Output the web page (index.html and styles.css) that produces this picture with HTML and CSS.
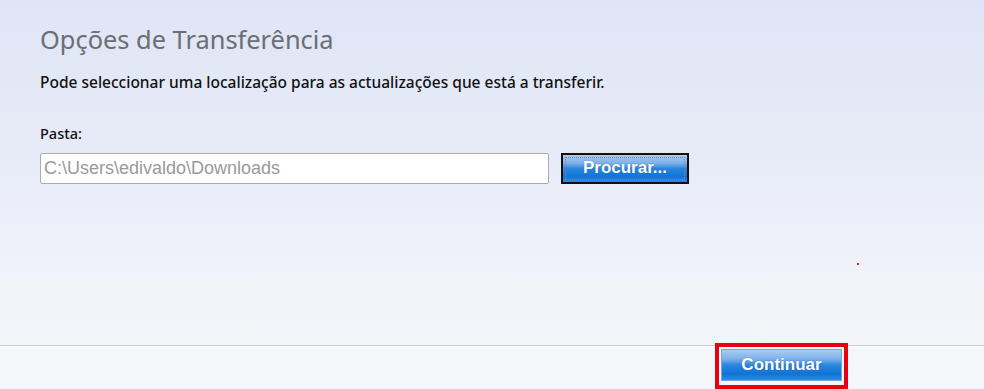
FILE: index.html
```html
<!DOCTYPE html>
<html lang="pt">
<head>
<meta charset="utf-8">
<link rel="stylesheet" href="styles.css">
</head>
<body>
<div class="page">
  <main class="content">
    <h1 class="title">Opções de Transferência</h1>
    <p class="intro">Pode seleccionar uma localização para as actualizações que está a transferir.</p>
    <label class="label">Pasta:</label>
    <div class="row">
      <div class="input">C:\Users\edivaldo\Downloads</div>
      <div class="btn btn-focus"><span class="focus">Procurar...</span></div>
    </div>
    <span class="dot"></span>
  </main>
  <footer class="footer">
    <div class="highlight">
      <div class="btn btn-continue">Continuar</div>
    </div>
  </footer>
</div>
</body>
</html>
```
FILE: styles.css
```css
html, body {
  margin: 0;
  padding: 0;
}
body {
  width: 984px;
  height: 389px;
  overflow: hidden;
  background: #f5f6fa;
}
.page {
  display: flex;
  flex-direction: column;
  height: 389px;
}
.content {
  position: relative;
  height: 348px;
  box-sizing: border-box;
  padding: 21px 0 0 40px;
  background: linear-gradient(to bottom, #dfe5f6 0%, #e8ecf7 50%, #f2f4fa 85%, #f4f5f9 100%);
  border-bottom: 1px solid #c9cbd0;
}
.title {
  margin: 0;
  font-family: "Noto Sans", "Open Sans", sans-serif;
  font-weight: 400;
  font-size: 25.4px;
  line-height: 36px;
  color: #6b6e72;
}
.intro {
  margin: 16px 0 0 0;
  font-family: "Noto Sans", sans-serif;
  font-size: 15.5px;
  font-weight: 500;
  line-height: 19px;
  color: #111;
}
.label {
  display: block;
  margin-top: 32px;
  font-family: "Noto Sans", sans-serif;
  font-size: 14.5px;
  font-weight: 500;
  line-height: 19px;
  color: #111;
}
.row {
  display: flex;
  gap: 12px;
  margin-top: 10px;
}
.input {
  width: 509px;
  height: 31px;
  box-sizing: border-box;
  background: #fff;
  border: 1px solid #a9abb0;
  border-radius: 2px;
  padding: 0 0 0 3px;
  font-family: "Liberation Sans", Arial, sans-serif;
  font-size: 18px;
  line-height: 29px;
  color: #9a9a9a;
}
.btn {
  box-sizing: border-box;
  display: flex;
  align-items: center;
  justify-content: center;
  font-family: "Liberation Sans", Arial, sans-serif;
  font-weight: 700;
  font-size: 17px;
  color: #fff;
  text-shadow: 0 0 1px rgba(0,40,100,0.5);
  background: linear-gradient(to bottom, #a9ccf2 0%, #7fb1ea 30%, #2a86dc 50%, #0f74d6 80%, #2a8ae0 100%);
}
.btn-focus {
  width: 128px;
  height: 31px;
  border: 2px solid #111;
  padding: 2px;
}
.focus {
  flex: 1;
  align-self: stretch;
  display: flex;
  align-items: center;
  justify-content: center;
  border: 1px dotted #a08060;
  padding-bottom: 1px;
}
.dot {
  position: absolute;
  left: 857px;
  top: 263px;
  width: 2px;
  height: 2px;
  background: #d81b3a;
}
.footer {
  flex: 1;
  border-top: 1px solid #fff;
  display: flex;
  justify-content: flex-start;
  padding-left: 715px;
  background: #f5f6fa;
}
.highlight {
  position: relative;
  z-index: 1;
  width: 133px;
  height: 46px;
  box-sizing: border-box;
  border: 4px solid #e60012;
  padding: 2px;
  margin-top: -4px;
}
.btn-continue {
  width: 100%;
  height: 32px;
  border: 1px solid #6fa8e4;
  padding-bottom: 1px;
}
```
